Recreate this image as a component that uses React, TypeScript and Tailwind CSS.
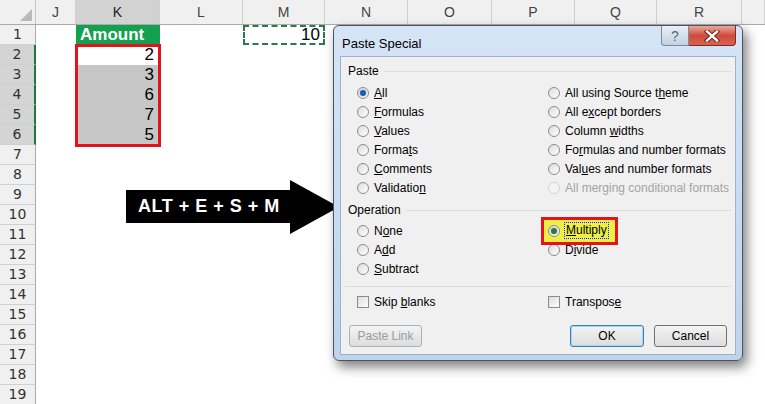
import React from 'react';

const cols = [
  { label: 'J', w: 'w-[40px]' },
  { label: 'K', w: 'w-[84px]' },
  { label: 'L', w: 'w-[83px]' },
  { label: 'M', w: 'w-[82px]' },
  { label: 'N', w: 'w-[83px]' },
  { label: 'O', w: 'w-[84px]' },
  { label: 'P', w: 'w-[83px]' },
  { label: 'Q', w: 'w-[82px]' },
  { label: 'R', w: 'w-[85px]' },
  { label: '', w: 'w-[23px]' },
];

const amounts: Record<number, string> = { 2: '2', 3: '3', 4: '6', 5: '7', 6: '5' };

const Cell: React.FC<{ row: number; col: string; w: string }> = ({ row, col, w }) => {
  if (row === 1 && col === 'K') {
    return (
      <div className={`${w} h-full shrink-0 bg-[#13a04f] text-white font-bold text-[17px] pl-[4px] leading-[20px]`}>
        Amount
      </div>
    );
  }
  if (row === 1 && col === 'M') {
    return (
      <div className={`${w} h-full shrink-0 border-2 border-dashed border-[#2a7a4a] text-right pr-[3px] text-[17px] leading-[16px]`}>
        10
      </div>
    );
  }
  if (col === 'K' && amounts[row]) {
    return (
      <div
        className={`${w} h-full shrink-0 text-right pr-[6px] text-[17px] leading-[20px] ${row === 2 ? 'bg-white' : 'bg-[#c6c6c6]'}`}
      >
        {amounts[row]}
      </div>
    );
  }
  return <div className={`${w} h-full shrink-0`} />;
};

const Radio: React.FC<{ checked?: boolean; disabled?: boolean; green?: boolean }> = ({ checked, disabled, green }) => (
  <div
    className={`w-[12px] h-[12px] shrink-0 rounded-full border flex items-center justify-center ${
      disabled ? 'border-[#d4d4d4] bg-[#f4f4f4]' : 'border-[#8c8c8c] bg-gradient-to-br from-[#dcdcdc] to-[#ffffff]'
    }`}
  >
    {checked && (
      <div className={`w-[6px] h-[6px] rounded-full ${green ? 'bg-[#2f7d32]' : 'bg-[#1d5fa8]'} shadow-[0_0_2px_#7fb2e5]`} />
    )}
  </div>
);

const Option: React.FC<{ label: React.ReactNode; checked?: boolean; disabled?: boolean }> = ({ label, checked, disabled }) => (
  <div className={`h-[19px] flex items-center gap-[5px] whitespace-nowrap ${disabled ? 'text-[#a3a3a3]' : 'text-black'}`}>
    <Radio checked={checked} disabled={disabled} />
    <span>{label}</span>
  </div>
);

const GroupHead: React.FC<{ title: string }> = ({ title }) => (
  <div className="h-[16px] flex items-center pl-[7px] pr-[4px]">
    <span>{title}</span>
    <div className="flex-1 ml-[5px] border-t border-[#dcdcdc]" />
  </div>
);

const Btn: React.FC<{ children: React.ReactNode; w: string; primary?: boolean; disabled?: boolean }> = ({
  children,
  w,
  primary,
  disabled,
}) => (
  <div
    className={`${w} h-[22px] rounded-[3px] border flex items-center justify-center bg-gradient-to-b from-[#f4f4f4] to-[#dddddd] ${
      primary ? 'border-[#3c7fb1] shadow-[inset_0_0_0_1px_#a6d7f5]' : 'border-[#707070]'
    } ${disabled ? 'text-[#9a9a9a] border-[#adb2b5]' : 'text-black'}`}
  >
    {children}
  </div>
);

export default function App() {
  const rows = Array.from({ length: 19 }, (_, i) => i + 1);

  return (
    <div className="relative w-[765px] h-[404px] overflow-hidden bg-white font-['Liberation_Sans',Arial,sans-serif]">
      {/* column headers */}
      <div className="flex h-[25px] bg-[#f0f0f0] border-b border-[#ababab] text-[#444] text-[14px]">
        <div className="w-[36px] shrink-0 relative border-r border-[#c6c6c6]">
          <svg className="absolute right-[3px] bottom-[3px]" width="12" height="12" viewBox="0 0 12 12">
            <polygon points="12,0 12,12 0,12" fill="#b9b9b9" />
          </svg>
        </div>
        {cols.map((c) => (
          <div
            key={c.label || 'x'}
            className={`${c.w} shrink-0 flex items-center justify-center border-r border-[#d0d0d0] ${
              c.label === 'K' ? 'bg-[#d2d2d2] text-[#222]' : ''
            }`}
          >
            {c.label}
          </div>
        ))}
      </div>

      {/* rows */}
      {rows.map((r) => {
        const sel = r >= 2 && r <= 6;
        return (
          <div key={r} className="flex h-[20px]">
            <div
              className={`w-[36px] shrink-0 flex items-center justify-center font-['DejaVu_Sans',sans-serif] text-[14px] text-[#333] border-b border-[#d0d0d0] ${
                sel ? 'bg-[#d4d4d4] border-r-2 border-r-[#217346]' : 'bg-[#f0f0f0] border-r border-r-[#ababab]'
              }`}
            >
              {r}
            </div>
            {cols.map((c) => (
              <Cell key={c.label || 'x'} row={r} col={c.label} w={c.w} />
            ))}
          </div>
        );
      })}

      {/* selection outline K2:K6 */}
      <div className="absolute left-[75px] top-[44px] w-[86px] h-[103px] border-[3px] border-[#e3121b]" />

      {/* arrow */}
      <div className="absolute left-[126px] top-[180px] w-[213px] h-[54px]">
        <svg width="213" height="54" viewBox="0 0 213 54" className="absolute inset-0">
          <polygon points="0,10 164,10 164,0 213,27 164,54 164,43 0,43" fill="#000" />
        </svg>
        <div className="absolute left-[12px] top-[10px] h-[33px] flex items-center text-white font-bold text-[18px] tracking-[0.5px]">
          ALT + E + S + M
        </div>
      </div>

      {/* dialog */}
      <div className="absolute left-[333px] top-[25px] w-[410px] h-[336px] rounded-[6px] border border-[#4a5563] bg-gradient-to-b from-[#d5e5f6] via-[#c9dcf1] to-[#bfd4ec] shadow-[4px_6px_12px_rgba(0,0,0,0.5)] flex flex-col px-[6px] pb-[5px] font-['Liberation_Sans',Arial,sans-serif] text-[12px]">
        <div className="h-[30px] flex items-start justify-between">
          <div className="pl-[2px] pt-[8px] text-[13px] text-black">Paste Special</div>
          <div className="flex">
            <div className="w-[28px] h-[20px] border border-t-0 border-[#7b8a9c] rounded-bl-[4px] bg-gradient-to-b from-[#e9eff6] to-[#c3d1e1] flex items-center justify-center text-[#56677d] text-[14px] leading-none">
              ?
            </div>
            <div className="w-[47px] h-[20px] border border-t-0 border-l-0 border-[#7d2a22] rounded-br-[4px] bg-gradient-to-b from-[#eaa79c] via-[#cf4a3a] to-[#d8634f] flex items-center justify-center">
              <svg width="16" height="12" viewBox="0 0 16 12">
                <path d="M3 1.5 L13 10.5 M13 1.5 L3 10.5" stroke="#5a1a14" strokeWidth="4.2" strokeLinecap="square" />
                <path d="M3 1.5 L13 10.5 M13 1.5 L3 10.5" stroke="#fff" strokeWidth="2.4" strokeLinecap="square" />
              </svg>
            </div>
          </div>
        </div>

        <div className="flex-1 border border-[#9fb2c8] bg-[#f0f0f0] pt-[6px] flex flex-col">
          <GroupHead title="Paste" />
          <div className="mt-[4px] grid grid-cols-[191px_1fr] pl-[16px]">
            <div>
              <Option checked label={<><u>A</u>ll</>} />
              <Option label={<><u>F</u>ormulas</>} />
              <Option label={<><u>V</u>alues</>} />
              <Option label={<>Forma<u>t</u>s</>} />
              <Option label={<><u>C</u>omments</>} />
              <Option label={<>Validatio<u>n</u></>} />
            </div>
            <div>
              <Option label={<>All using Source t<u>h</u>eme</>} />
              <Option label={<>All e<u>x</u>cept borders</>} />
              <Option label={<>Column <u>w</u>idths</>} />
              <Option label={<>Fo<u>r</u>mulas and number formats</>} />
              <Option label={<>Val<u>u</u>es and number formats</>} />
              <Option disabled label="All merging conditional formats" />
            </div>
          </div>

          <div className="mt-[5px]">
            <GroupHead title="Operation" />
          </div>
          <div className="mt-[3px] grid grid-cols-[191px_1fr] pl-[16px]">
            <div>
              <Option label={<>N<u>o</u>ne</>} />
              <Option label={<>A<u>d</u>d</>} />
              <Option label={<><u>S</u>ubtract</>} />
            </div>
            <div>
              <div className="relative">
                <div className="absolute left-[-7px] top-[-4px] w-[77px] h-[28px] border-[3px] border-[#e3121b] bg-[#eeee45]" />
                <div className="relative h-[19px] flex items-center gap-[4px]">
                  <Radio checked green />
                  <span className="border border-dotted border-[#333] px-[1px] leading-[15px]">
                    <u>M</u>ultiply
                  </span>
                </div>
              </div>
              <Option label={<>D<u>i</u>vide</>} />
            </div>
          </div>

          <div className="mt-[8px] mx-[4px] border-t border-[#dcdcdc]" />

          <div className="mt-[5px] grid grid-cols-[191px_1fr] pl-[16px]">
            <div className="h-[19px] flex items-center gap-[5px]">
              <div className="w-[12px] h-[12px] border border-[#8c8c8c] bg-gradient-to-br from-[#dcdcdc] to-white" />
              <span>
                Skip <u>b</u>lanks
              </span>
            </div>
            <div className="h-[19px] flex items-center gap-[5px]">
              <div className="w-[12px] h-[12px] border border-[#8c8c8c] bg-gradient-to-br from-[#dcdcdc] to-white" />
              <span>
                Transpos<u>e</u>
              </span>
            </div>
          </div>

          <div className="mt-[14px] px-[8px] flex items-center">
            <Btn w="w-[73px]" disabled>
              Paste Link
            </Btn>
            <div className="flex-1" />
            <Btn w="w-[74px]" primary>
              OK
            </Btn>
            <div className="w-[10px]" />
            <Btn w="w-[73px]">Cancel</Btn>
          </div>
        </div>
      </div>
    </div>
  );
}
